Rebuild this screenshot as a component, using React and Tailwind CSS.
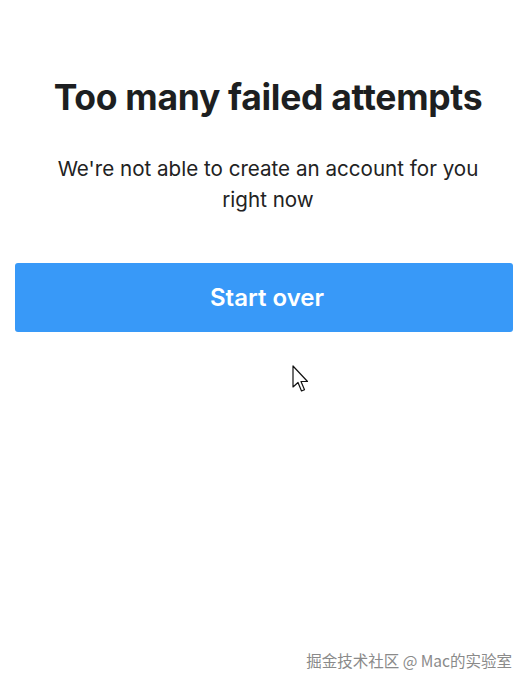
export default function App() {
  return (
    <div
      className="relative w-[530px] h-[688px] bg-white overflow-hidden"
      style={{ fontFamily: "Inter, 'Noto Sans', sans-serif" }}
    >
      <div className="flex flex-col items-center pt-[75px] pl-[15px] pr-[17px]">
        <h1 className="ml-[8px] text-[35.5px] leading-[46px] font-bold tracking-[-0.3px] text-[#1d1f21]">
          Too many failed attempts
        </h1>
        <p className="ml-[8px] mt-[32px] w-[460px] text-center text-[20.6px] leading-[31px] text-[#222] font-normal">
          We're not able to create an account for you right now
        </p>
        <button className="mt-[48px] w-full h-[69px] rounded-[3px] bg-[#3899f8] text-white text-[24px] font-semibold">
          <span className="ml-[6px]">Start over</span>
        </button>
      </div>

      {/* mouse pointer */}
      <svg
        className="absolute left-[292px] top-[365px]"
        width="20"
        height="29"
        viewBox="0 0 20 29"
      >
        <path
          d="M1 1 L1 22 L6 17.5 L9.5 26 L12.5 24.8 L9 16.5 L15.5 16.5 Z"
          fill="#fff"
          stroke="#111"
          strokeWidth="1.2"
          strokeLinejoin="round"
        />
      </svg>

      <div
        className="absolute right-[18px] bottom-[16px] text-[15.5px] text-[#8a8a8a]"
        style={{ fontFamily: "'Noto Sans CJK SC', 'Noto Sans', sans-serif" }}
      >
        掘金技术社区 @ Mac的实验室
      </div>
    </div>
  );
}
